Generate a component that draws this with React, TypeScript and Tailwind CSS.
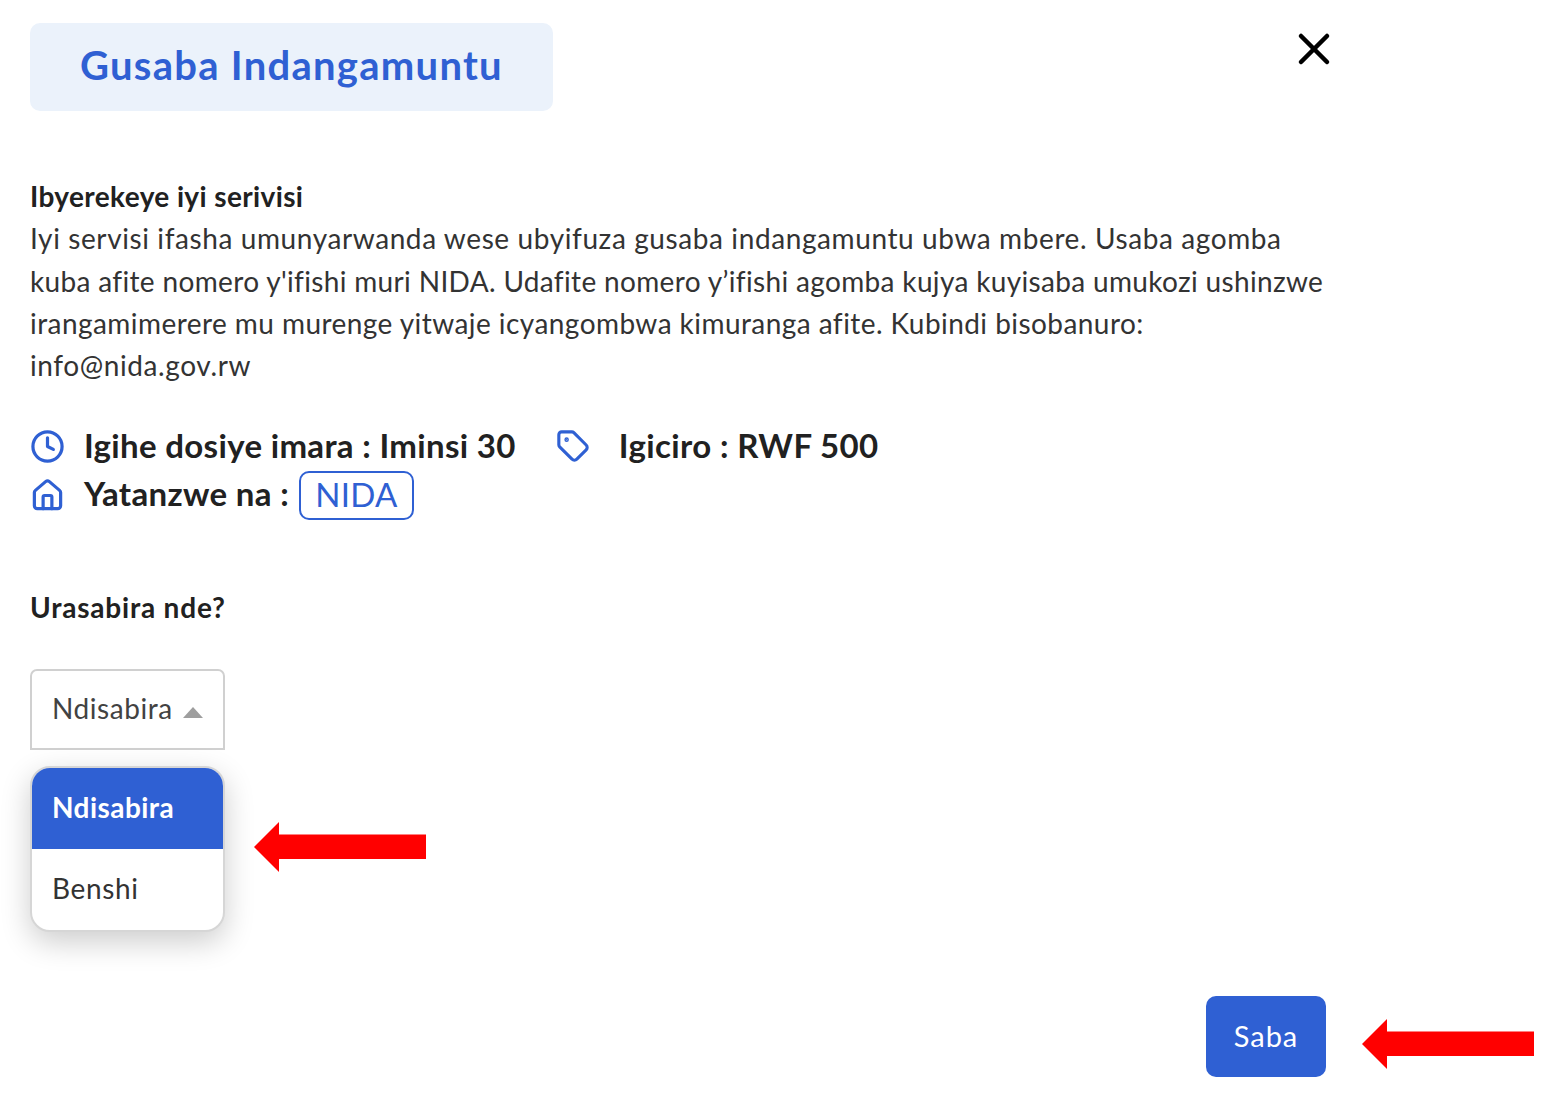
import React from 'react';
import { Clock, Tag, Home, X } from 'lucide-react';

const RedArrow = ({ className = '' }: { className?: string }) => (
  <svg className={className} width="172" height="50" viewBox="0 0 172 50">
    <path d="M0 25 L25 0 V12.500 H172 V37 H25 V50 Z" fill="#ff0000" />
  </svg>
);

export default function App() {
  return (
    <div className="relative h-[1094px] w-full overflow-hidden bg-white font-['Lato',sans-serif] text-[#212121]">
      <div className="flex w-[1340px] flex-col pl-[30px] pt-[23px]">
        {/* Header */}
        <div className="flex h-[88px] items-start justify-between">
          <div className="flex h-[88px] w-[523px] items-center justify-center rounded-[10px] bg-[#ebf2fb] pb-[5px]">
            <h1 className="whitespace-nowrap text-[40px] font-bold tracking-[1.27px] text-[#2f60d3]">Gusaba Indangamuntu</h1>
          </div>
          <X className="text-black" size={52} strokeWidth={2.1} />
        </div>

        {/* Description */}
        <div className="mt-[64px] whitespace-nowrap text-[28px] leading-[42.300px]">
          <p className="font-bold tracking-[0.38px]">Ibyerekeye iyi serivisi</p>
          <div className="text-[#333333]">
            <p className="tracking-[0.6px]">Iyi servisi ifasha umunyarwanda wese ubyifuza gusaba indangamuntu ubwa mbere. Usaba agomba</p>
            <p className="tracking-[0.34px]">kuba afite nomero y'ifishi muri NIDA. Udafite nomero y’ifishi agomba kujya kuyisaba umukozi ushinzwe</p>
            <p className="tracking-[0.44px]">irangamimerere mu murenge yitwaje icyangombwa kimuranga afite. Kubindi bisobanuro:</p>
            <p className="tracking-[0.6px]">info@nida.gov.rw</p>
          </div>
        </div>

        {/* Meta */}
        <div className="mt-[35px] flex h-[49px] items-center whitespace-nowrap text-[33px] font-bold tracking-[0.33px]">
          <Clock className="ml-[-0.5px] mt-[2px] text-[#2f60d3]" size={35} strokeWidth={2.2} />
          <span className="ml-[19.500px]">Igihe dosiye imara : Iminsi 30</span>
          <Tag className="ml-[40px] text-[#2f60d3]" size={34} strokeWidth={2.2} />
          <span className="ml-[29px] tracking-[0.38px]">Igiciro : RWF 500</span>
        </div>
        <div className="flex h-[49px] items-center whitespace-nowrap text-[33px] font-bold tracking-[0.33px]">
          <Home className="ml-[-0.5px] mt-[2px] text-[#2f60d3]" size={35} strokeWidth={2.2} />
          <span className="ml-[19.500px] pb-[2px]">Yatanzwe na :</span>
          <span className="ml-[10px] mt-[2px] flex h-[49px] w-[115px] items-center justify-center rounded-[10px] border-2 border-[#2f60d3] pb-[2px] text-[33px] font-normal text-[#2f60d3]">
            NIDA
          </span>
        </div>

        {/* Form */}
        <label className="mt-[67px] text-[28px] font-bold leading-[42px] tracking-[0.8px]">Urasabira nde?</label>

        <div className="mt-[41px] flex h-[81px] w-[195px] items-start gap-[10px] rounded-t-[7px] border-2 border-[#d0d0d0] pl-[20px] pt-[16px] text-[28px] leading-[42px] tracking-[0.55px] text-[#424242]">
          <span>Ndisabira</span>
          <span className="mt-[20px] h-0 w-0 border-x-[10px] border-b-[11px] border-x-transparent border-b-[#9e9e9e]" />
        </div>

        <div className="mt-[16px] flex w-[195px] flex-col overflow-hidden rounded-[20px] border-2 border-[#d6d6d6] bg-white text-[28px] shadow-[0_10px_30px_rgba(0,0,0,0.2)]">
          <div className="flex h-[81px] items-center bg-[#2f60d3] pb-[3px] pl-[20px] font-bold tracking-[0.45px] text-white">Ndisabira</div>
          <div className="flex h-[81px] items-center pb-[3px] pl-[20px] tracking-[0.65px] text-[#333333]">Benshi</div>
        </div>
      </div>

      {/* Submit */}
      <button className="absolute left-[1206px] top-[996px] h-[81px] w-[120px] rounded-[10px] bg-[#2f60d3] pb-[2px] text-[29px] tracking-[1px] text-white">
        Saba
      </button>

      {/* Annotation arrows */}
      <RedArrow className="absolute left-[254px] top-[822px]" />
      <RedArrow className="absolute left-[1362px] top-[1019px]" />
    </div>
  );
}
